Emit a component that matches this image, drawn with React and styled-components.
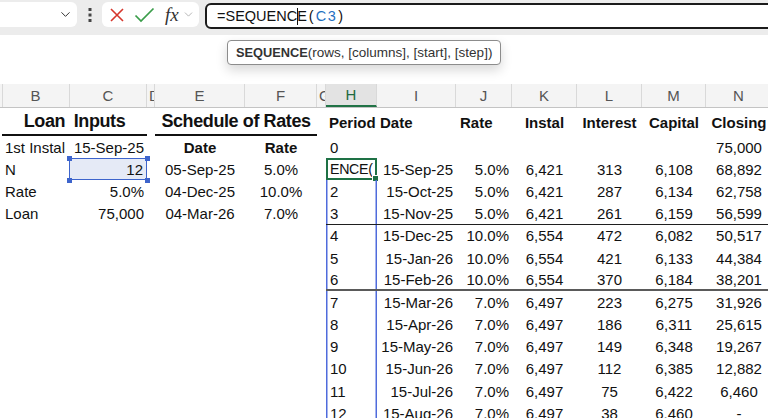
import React from "react"
import styled, { createGlobalStyle } from "styled-components"
import { ChevronDown } from "lucide-react"

const GlobalStyle = createGlobalStyle`
  html, body {
    margin: 0;
    padding: 0;
    background: #fff;
  }
  body {
    font-family: "Liberation Sans", Arial, sans-serif;
    color: #111;
    overflow: hidden;
  }
`

const GRID = "2px 68px 77px 8px 90px 72px 9px 51px 79px 56px 65px 65px 64px 66px"
const LETTERS = ["", "B", "C", "D", "E", "F", "G", "H", "I", "J", "K", "L", "M", "N"]
const NARROW = [0, 3, 6]

const schedule = [
  ["1", "15-Sep-25", "5.0%", "6,421", "313", "6,108", "68,892"],
  ["2", "15-Oct-25", "5.0%", "6,421", "287", "6,134", "62,758"],
  ["3", "15-Nov-25", "5.0%", "6,421", "261", "6,159", "56,599"],
  ["4", "15-Dec-25", "10.0%", "6,554", "472", "6,082", "50,517"],
  ["5", "15-Jan-26", "10.0%", "6,554", "421", "6,133", "44,384"],
  ["6", "15-Feb-26", "10.0%", "6,554", "370", "6,184", "38,201"],
  ["7", "15-Mar-26", "7.0%", "6,497", "223", "6,275", "31,926"],
  ["8", "15-Apr-26", "7.0%", "6,497", "186", "6,311", "25,615"],
  ["9", "15-May-26", "7.0%", "6,497", "149", "6,348", "19,267"],
  ["10", "15-Jun-26", "7.0%", "6,497", "112", "6,385", "12,882"],
  ["11", "15-Jul-26", "7.0%", "6,497", "75", "6,422", "6,460"],
  ["12", "15-Aug-26", "7.0%", "6,497", "38", "6,460", "-"],
]

const inputs = [
  ["N", "12", "05-Sep-25", "5.0%"],
  ["Rate", "5.0%", "04-Dec-25", "10.0%"],
  ["Loan", "75,000", "04-Mar-26", "7.0%"],
]

export default function App() {
  return (
    <Page>
      <GlobalStyle />
      <Toolbar>
        <NameBox>
          <ChevronDown size={15} strokeWidth={1.6} color="#333" />
        </NameBox>
        <Grip>
          <svg width="4" height="14" viewBox="0 0 4 14">
            <rect x="0.5" y="0" width="3" height="3" fill="#444" />
            <rect x="0.5" y="5.5" width="3" height="3" fill="#444" />
            <rect x="0.5" y="11" width="3" height="3" fill="#444" />
          </svg>
        </Grip>
        <EditBox>
          <svg width="16" height="16" viewBox="0 0 16 16">
            <path d="M2 2 L14 14 M14 2 L2 14" stroke="#d6362c" strokeWidth="1.6" fill="none" />
          </svg>
          <svg width="21" height="16" viewBox="0 0 21 16">
            <path d="M1.5 8.5 L7 14 L19.5 1.5" stroke="#3a9d4a" strokeWidth="1.7" fill="none" />
          </svg>
          <Fx>fx</Fx>
          <ChevronDown size={13} strokeWidth={1.4} color="#a0a0a0" />
        </EditBox>
        <FormulaBox>
          =SEQUENC<Caret />E<Paren>(</Paren>
          <RefText>C3</RefText>
          <Paren>)</Paren>
        </FormulaBox>
      </Toolbar>

      <Gap>
        <Tooltip>
          <b>SEQUENCE</b>(rows, [columns], [start], [step])
        </Tooltip>
      </Gap>

      <Sheet>
        <HeadRow>
          {LETTERS.map((l, i) => (
            <ColHead key={i} $narrow={NARROW.includes(i)} $active={l === "H"}>
              {l}
            </ColHead>
          ))}
        </HeadRow>

        <Row $h={28}>
          <Cell />
          <Title $span={2}>Loan{"\u2002"}Inputs</Title>
          <Cell />
          <Title $span={2}>Schedule of Rates</Title>
          <Cell />
          <Cell $bold>Period</Cell>
          <Cell $bold>Date</Cell>
          <Cell $bold $pl={4}>Rate</Cell>
          <Cell $bold $align="center">Instal</Cell>
          <Cell $bold $align="center">Interest</Cell>
          <Cell $bold $align="center">Capital</Cell>
          <Cell $bold $align="center">Closing</Cell>
        </Row>

        <Row $h={22.2}>
          <Cell />
          <Cell>1st Instal</Cell>
          <Cell $align="right">15-Sep-25</Cell>
          <Cell />
          <Cell $bold $align="center">Date</Cell>
          <Cell $bold $align="center">Rate</Cell>
          <Cell />
          <Cell $pl={4}>0</Cell>
          <Cell />
          <Cell />
          <Cell />
          <Cell />
          <Cell />
          <Cell $align="center">75,000</Cell>
        </Row>

        {schedule.map((s, r) => {
          const left = inputs[r]
          const rule = s[0] === "3" ? "thin" : s[0] === "6" ? "thick" : null
          return (
            <Row $h={22.2} key={s[0]}>
              <Cell />
              <Cell>{left ? left[0] : ""}</Cell>
              {r === 0 ? (
                <RefCell $align="right">
                  {left[1]}
                  <Handle $x="left" $y="top" />
                  <Handle $x="right" $y="top" />
                  <Handle $x="left" $y="bottom" />
                  <Handle $x="right" $y="bottom" />
                </RefCell>
              ) : (
                <Cell $align="right">{left ? left[1] : ""}</Cell>
              )}
              <Cell />
              <Cell $align="center">{left ? left[2] : ""}</Cell>
              <Cell $align="center">{left ? left[3] : ""}</Cell>
              <Cell />
              {r === 0 ? (
                <ActiveCell>
                  <Clip>ENCE(</Clip>
                  <FillHandle />
                </ActiveCell>
              ) : (
                <Cell $pl={4} $rule={rule} $spill>
                  {s[0]}
                </Cell>
              )}
              <Cell $align="right" $rule={rule}>{s[1]}</Cell>
              <Cell $align="right" $rule={rule}>{s[2]}</Cell>
              <Cell $align="center" $rule={rule}>{s[3]}</Cell>
              <Cell $align="center" $rule={rule}>{s[4]}</Cell>
              <Cell $align="center" $rule={rule}>{s[5]}</Cell>
              <Cell $align="center" $rule={rule}>{s[6]}</Cell>
            </Row>
          )
        })}
      </Sheet>
    </Page>
  )
}

const Page = styled.div`
  width: 768px;
  height: 418px;
  overflow: hidden;
  background: #fff;
`

const Toolbar = styled.div`
  display: flex;
  align-items: flex-start;
  height: 35px;
  padding-top: 2px;
  box-sizing: border-box;
  background: #ececec;
`

const NameBox = styled.div`
  width: 77px;
  height: 25px;
  background: #fff;
  border-radius: 0 6px 6px 0;
  display: flex;
  align-items: center;
  justify-content: flex-end;
  padding-right: 4px;
  box-sizing: border-box;
`

const Grip = styled.div`
  width: 25px;
  height: 25px;
  display: flex;
  align-items: center;
  justify-content: center;
`

const EditBox = styled.div`
  width: 97px;
  height: 25px;
  background: #fff;
  border-radius: 6px;
  display: flex;
  align-items: center;
  gap: 9px;
  padding-left: 7px;
  box-sizing: border-box;
`

const Fx = styled.span`
  font-family: "Liberation Serif", "Times New Roman", serif;
  font-style: italic;
  font-size: 19px;
  color: #333;
  margin-left: 1px;
  margin-right: -6px;
  line-height: 1;
`

const FormulaBox = styled.div`
  flex: 1;
  margin-left: 6px;
  margin-right: -10px;
  margin-top: 1px;
  height: 26px;
  border: 2px solid #1b1b1b;
  border-radius: 6px;
  background: #fff;
  box-sizing: border-box;
  display: flex;
  align-items: center;
  padding-left: 10px;
  font-size: 14.5px;
  color: #111;
  white-space: pre;
`

const Caret = styled.span`
  display: inline-block;
  width: 1px;
  height: 17px;
  background: #111;
  margin: 0 -0.5px;
`

const Paren = styled.span`
  margin: 0 2px;
`

const RefText = styled.span`
  color: #1f6fbf;
  letter-spacing: 1.5px;
  margin-right: -1px;
`

const Gap = styled.div`
  position: relative;
  height: 49px;
`

const Tooltip = styled.div`
  position: absolute;
  left: 227px;
  top: 5px;
  height: 23px;
  padding: 0 8px;
  display: flex;
  align-items: center;
  border: 1px solid #8c8c8c;
  border-radius: 4px;
  background: #fff;
  box-shadow: 0 5px 12px rgba(0, 0, 0, 0.16);
  font-size: 13.5px;
  color: #333;
  white-space: pre;

  b {
    font-weight: 700;
    font-size: 12.8px;
  }
`

const Sheet = styled.div`
  display: flex;
  flex-direction: column;
`

const HeadRow = styled.div`
  display: grid;
  grid-template-columns: ${GRID};
  height: 23px;
  background: #f4f4f4;
  border-bottom: 1px solid #c4c4c4;
`

const ColHead = styled.div`
  display: flex;
  align-items: center;
  justify-content: ${(p) => (p.$narrow ? "flex-start" : "center")};
  padding-left: ${(p) => (p.$narrow ? "2px" : "0")};
  overflow: hidden;
  box-sizing: border-box;
  border-right: 1px solid #d9d9d9;
  border-bottom: ${(p) => (p.$active ? "2px solid #217346" : "none")};
  background: ${(p) => (p.$active ? "#e3e3e3" : "transparent")};
  color: ${(p) => (p.$active ? "#1e6b41" : "#555")};
  font-size: 15px;
`

const Row = styled.div`
  display: grid;
  grid-template-columns: ${GRID};
  height: ${(p) => p.$h}px;
  flex-shrink: 0;
`

const Cell = styled.div`
  grid-column: span ${(p) => p.$span || 1};
  position: relative;
  display: flex;
  align-items: center;
  justify-content: ${(p) =>
    p.$align === "right" ? "flex-end" : p.$align === "center" ? "center" : "flex-start"};
  padding: 0 3px 0 ${(p) => (p.$pl ?? 3)}px;
  box-sizing: border-box;
  font-size: 15px;
  font-weight: ${(p) => (p.$bold ? 700 : 400)};
  white-space: nowrap;
  border-bottom: ${(p) =>
    p.$rule === "thin" ? "1px solid #1f1f1f" : p.$rule === "thick" ? "2px solid #5a5a5a" : "none"};
  box-shadow: ${(p) =>
    p.$spill ? "inset 1.5px 0 #4f6bdc, inset -1.5px 0 #4f6bdc" : "none"};
`

const Title = styled(Cell)`
  justify-content: center;
  font-size: 18px;
  font-weight: 700;
  letter-spacing: -0.4px;
  border-bottom: 2px solid #111;
`

const RefCell = styled(Cell)`
  background: #e5eaf6;
  border: 1.5px solid #3d64cc;
  margin-left: -1px;
`

const Handle = styled.span`
  position: absolute;
  width: 5px;
  height: 5px;
  background: #3d64cc;
  ${(p) => p.$x}: -3.5px;
  ${(p) => p.$y}: -3.5px;
`

const ActiveCell = styled(Cell)`
  border: 2px solid #1e7145;
  padding-left: 2px;
  padding-right: 0;
`

const Clip = styled.span`
  display: block;
  overflow: hidden;
  width: 100%;
  font-size: 14.2px;
  letter-spacing: -0.3px;
`

const FillHandle = styled.span`
  position: absolute;
  right: -4px;
  bottom: -4px;
  width: 5px;
  height: 5px;
  background: #1e7145;
  border: 1px solid #fff;
`
